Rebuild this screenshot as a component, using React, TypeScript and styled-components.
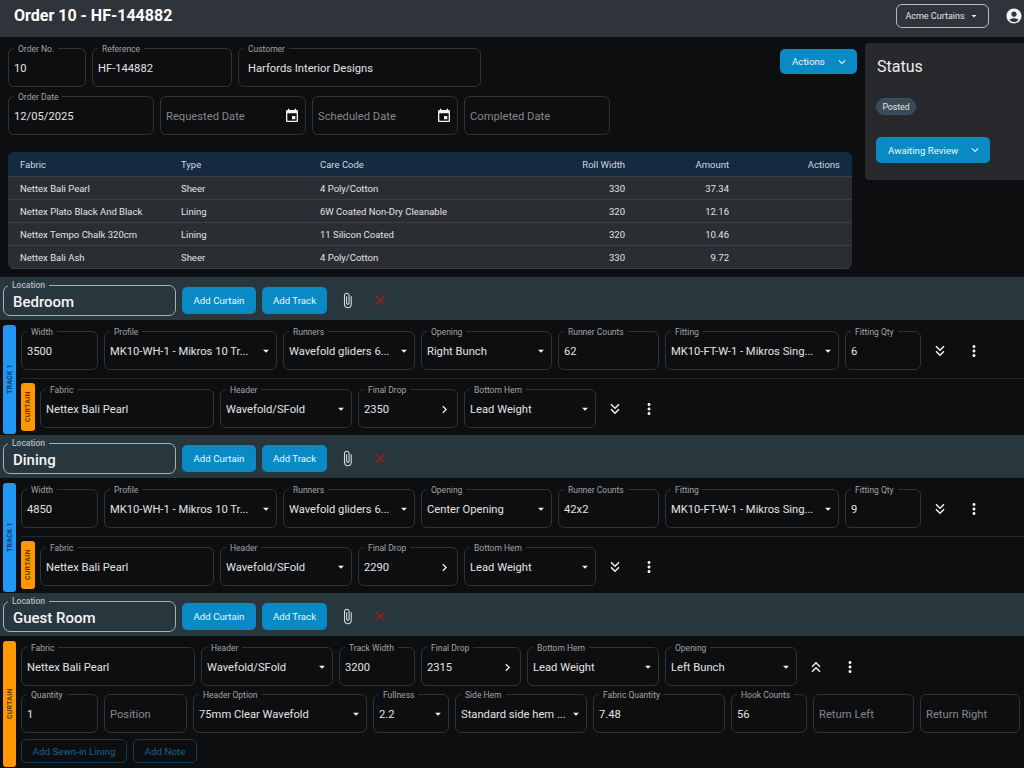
import React from 'react'
import styled, { createGlobalStyle } from 'styled-components'

const FONT = 'Roboto, "Noto Sans", Arial, sans-serif'

const GlobalStyle = createGlobalStyle`
  html, body { margin: 0; padding: 0; background: #0d0e10; }
  body { font-family: ${FONT}; color: #e3e3e3; }
  * { box-sizing: border-box; }
`

const Page = styled.div`
  width: 1024px;
  height: 768px;
  overflow: hidden;
  background: #0d0e10;
`

const TopBar = styled.header`
  height: 37px;
  display: flex;
  align-items: center;
  padding: 0 1px 6px 14px;
  background: #2f333a;
`

const Title = styled.h1`
  margin: 0;
  flex: 1;
  font-size: 16px;
  font-weight: 700;
  color: #fff;
`

const CompanyButton = styled.button`
  width: 93px;
  height: 24px;
  margin-right: 16px;
  display: flex;
  align-items: center;
  justify-content: center;
  gap: 3px;
  border: 1px solid #b6babd;
  border-radius: 6px;
  background: transparent;
  color: #e3e3e3;
  font: 9px ${FONT};
`

const TopSection = styled.section`
  display: flex;
  height: 240px;
  border-bottom: 3px solid #0d1419;
`

const OrderColumn = styled.div`
  width: 857px;
  padding: 11px 0 0 8px;
`

const FieldRow = styled.div<{ $gap?: number }>`
  display: flex;
  align-items: flex-start;
  gap: ${({ $gap }) => $gap ?? 6}px;
`

const SecondRow = styled(FieldRow)`
  margin-top: 9px;
`

const FieldBox = styled.div<{ $w: number; $h?: number; $inset?: number }>`
  position: relative;
  flex: none;
  width: ${({ $w }) => $w}px;
  height: ${({ $h }) => $h ?? 39}px;
  display: flex;
  align-items: center;
  padding: 1px 5px 0 ${({ $inset }) => $inset ?? 5}px;
  border: 1px solid #303235;
  border-radius: 6px;
  font-size: 11.2px;
`

const FieldLabel = styled.label`
  position: absolute;
  top: -5px;
  left: 5px;
  padding: 0 4px;
  background: #0d0e10;
  color: #a2a4a6;
  font-size: 8.5px;
  line-height: 10px;
  white-space: nowrap;
`

const FieldValue = styled.span<{ $muted?: boolean }>`
  flex: 1;
  min-width: 0;
  overflow: hidden;
  white-space: nowrap;
  color: ${({ $muted }) => ($muted ? '#85878a' : '#e3e3e3')};
`

const Icon = styled.svg<{ $size: number; $color?: string }>`
  flex: none;
  width: ${({ $size }) => $size}px;
  height: ${({ $size }) => $size}px;
  fill: ${({ $color }) => $color ?? '#f2f2f2'};
`

const DropIcon = styled(Icon)`
  margin-right: -2px;
`

const PrimaryButton = styled.button<{ $w: number; $h?: number }>`
  flex: none;
  width: ${({ $w }) => $w}px;
  height: ${({ $h }) => $h ?? 27}px;
  display: flex;
  align-items: center;
  justify-content: center;
  border: 0;
  border-radius: 5px;
  background: #0a8ac4;
  color: #eef6fa;
  font: 9.7px ${FONT};
`

const MenuButton = styled(PrimaryButton)`
  justify-content: space-between;
  padding: 0 8px 0 12px;
`

const ActionsButton = styled(MenuButton)`
  margin-left: auto;
  margin-top: 1px;
`

const MaterialTable = styled.table`
  width: 844px;
  margin-top: 17px;
  border-collapse: separate;
  border-spacing: 0;
  table-layout: fixed;
  border-radius: 6px;
  overflow: hidden;
  font-size: 9.5px;
`

const TableColumn = styled.col<{ $w: number }>`
  width: ${({ $w }) => $w}px;
`

const HeadCell = styled.th<{ $right?: boolean }>`
  height: 25px;
  padding: 1px 12px 0;
  background: #142a40;
  border-bottom: 1px solid #3c4046;
  color: #d4d8dc;
  font-weight: 400;
  text-align: ${({ $right }) => ($right ? 'right' : 'left')};
`

const BodyCell = styled.td<{ $right?: boolean }>`
  height: 23px;
  padding: 1px 12px 0;
  background: #2a2d32;
  border-bottom: 1px solid #3c4046;
  color: #e3e3e3;
  text-align: ${({ $right }) => ($right ? 'right' : 'left')};
`

const StatusPanel = styled.aside`
  width: 159px;
  height: 137px;
  margin: 6px 0 0 8px;
  padding: 13px 11px;
  background: #27292d;
  border-radius: 4px 0 0 4px;
`

const StatusTitle = styled.h2`
  margin: 0 0 0 1px;
  font-size: 16px;
  line-height: 22px;
  font-weight: 400;
  color: #eee;
`

const StatusChip = styled.div`
  width: 40px;
  height: 17px;
  margin-top: 20px;
  display: flex;
  align-items: center;
  justify-content: center;
  background: #3a4a55;
  border: 1px solid #2f5870;
  border-radius: 9px;
  font-size: 8.7px;
`

const StatusButton = styled(MenuButton)`
  margin-top: 22px;
`

const LocationBar = styled.div`
  height: 43px;
  display: flex;
  align-items: center;
  gap: 6px;
  padding: 4px 0 0 3px;
  background: #28363e;
`

const LocationField = styled.div`
  position: relative;
  width: 173px;
  height: 31px;
  display: flex;
  align-items: center;
  padding: 2px 0 0 9px;
  border: 1.5px solid #a6b2b7;
  border-radius: 7px;
  color: #f5f5f5;
  font-size: 15px;
  font-weight: 500;
`

const LocationLabel = styled(FieldLabel)`
  background: #28363e;
  left: 4px;
  top: -6px;
  color: #b4bcc0;
`

const IconSlot = styled.span`
  flex: none;
  width: 28px;
  height: 39px;
  display: flex;
  align-items: center;
  justify-content: center;
`

const RemoveSlot = styled(IconSlot)`
  margin-left: -1px;
`

const ExpandSlot = styled(IconSlot)`
  margin-left: -1px;
`

const ItemBlock = styled.div<{ $h: number }>`
  height: ${({ $h }) => $h}px;
  display: flex;
  gap: 5px;
  padding: 5px 0 1px 3px;
`

const SideTag = styled.div<{ $bg: string; $fg: string; $w?: number }>`
  flex: none;
  width: ${({ $w }) => $w ?? 13}px;
  display: flex;
  align-items: center;
  justify-content: center;
  background: ${({ $bg }) => $bg};
  color: ${({ $fg }) => $fg};
  border-radius: 3px;
  font-size: 7px;
  font-weight: 700;
  letter-spacing: 0.2px;
  writing-mode: vertical-rl;
  transform: rotate(180deg);
`

const ItemBody = styled.div`
  flex: 1;
  min-width: 0;
  display: flex;
  flex-direction: column;
`

const TrackRow = styled.div`
  height: 54px;
  padding-top: 6px;
  border-bottom: 1px solid #26282a;
`

const NestedCurtain = styled.div`
  height: 48px;
  margin-top: 4px;
  display: flex;
  gap: 5px;
`

const NestedFields = styled.div`
  padding-top: 6px;
`

const CurtainBody = styled(ItemBody)`
  padding-top: 6px;
  gap: 8px;
`

const LinkRow = styled.div`
  display: flex;
  gap: 6px;
  margin-top: -2px;
`

const OutlineButton = styled.button<{ $w: number }>`
  width: ${({ $w }) => $w}px;
  height: 24px;
  border: 1px solid #123a52;
  border-radius: 5px;
  background: transparent;
  color: #14628e;
  font: 9.8px ${FONT};
`

const paths = {
  account:
    'M12 2C6.48 2 2 6.48 2 12s4.48 10 10 10 10-4.48 10-10S17.52 2 12 2zm0 4c1.93 0 3.5 1.57 3.5 3.5S13.93 13 12 13s-3.5-1.57-3.5-3.5S10.07 6 12 6zm0 14c-2.03 0-4.43-.82-6.14-2.88C7.55 15.8 9.68 15 12 15s4.45.8 6.14 2.12C16.43 19.18 14.03 20 12 20z',
  event:
    'M17 12h-5v5h5v-5zM16 1v2H8V1H6v2H5c-1.11 0-1.99.9-1.99 2L3 19c0 1.1.89 2 2 2h14c1.1 0 2-.9 2-2V5c0-1.1-.9-2-2-2h-1V1h-2zm3 18H5V8h14v11z',
  dropdown: 'M7 10l5 5 5-5z',
  expand: 'M16.59 8.59 12 13.17 7.41 8.59 6 10l6 6 6-6z',
  chevronRight: 'M10 6 8.59 7.41 13.17 12l-4.58 4.59L10 18l6-6z',
  doubleDown: 'M18 6.41 16.59 5 12 9.58 7.41 5 6 6.41l6 6z M18 13l-1.41-1.41L12 16.17l-4.59-4.58L6 13l6 6z',
  doubleUp: 'M6 17.59 7.41 19 12 14.42 16.59 19 18 17.59l-6-6z M6 11l1.41 1.41L12 7.83l4.59 4.58L18 11l-6-6z',
  more: 'M12 8c1.1 0 2-.9 2-2s-.9-2-2-2-2 .9-2 2 .9 2 2 2zm0 2c-1.1 0-2 .9-2 2s.9 2 2 2 2-.9 2-2-.9-2-2-2zm0 6c-1.1 0-2 .9-2 2s.9 2 2 2 2-.9 2-2-.9-2-2-2z',
  clip: 'M16.5 6v11.5c0 2.21-1.79 4-4 4s-4-1.79-4-4V5c0-1.38 1.12-2.5 2.5-2.5s2.5 1.12 2.5 2.5v10.5c0 .55-.45 1-1 1s-1-.45-1-1V6H10v9.5c0 1.38 1.12 2.5 2.5 2.5s2.5-1.12 2.5-2.5V5c0-2.21-1.79-4-4-4S7 2.79 7 5v12.5c0 3.04 2.46 5.5 5.5 5.5s5.5-2.46 5.5-5.5V6h-1.5z',
  close:
    'M19 6.41 17.59 5 12 10.59 6.41 5 5 6.41 10.59 12 5 17.59 6.41 19 12 13.41 17.59 19 19 17.59 13.41 12z',
}

type IconName = keyof typeof paths

const Glyph = ({ name, size, color }: { name: IconName; size: number; color?: string }) => (
  <Icon viewBox="0 0 24 24" $size={size} $color={color}>
    <path d={paths[name]} />
  </Icon>
)

type FieldProps = {
  w: number
  label?: string
  value?: string
  placeholder?: string
  icon?: IconName
  inset?: number
}

const Field = ({ w, label, value, placeholder, icon, inset }: FieldProps) => (
  <FieldBox $w={w} $inset={inset}>
    {label && <FieldLabel>{label}</FieldLabel>}
    <FieldValue $muted={!value}>{value ?? placeholder}</FieldValue>
    {icon === 'dropdown' && (
      <DropIcon viewBox="0 0 24 24" $size={14}>
        <path d={paths.dropdown} />
      </DropIcon>
    )}
    {icon === 'chevronRight' && <Glyph name="chevronRight" size={15} />}
    {icon === 'event' && <Glyph name="event" size={16} />}
  </FieldBox>
)

const RowActions = ({ expand }: { expand: IconName }) => (
  <>
    <ExpandSlot>
      <Glyph name={expand} size={18} />
    </ExpandSlot>
    <IconSlot>
      <Glyph name="more" size={18} />
    </IconSlot>
  </>
)

const materials = [
  ['Nettex Bali Pearl', 'Sheer', '4 Poly/Cotton', '330', '37.34'],
  ['Nettex Plato Black And Black', 'Lining', '6W Coated Non-Dry Cleanable', '320', '12.16'],
  ['Nettex Tempo Chalk 320cm', 'Lining', '11 Silicon Coated', '320', '10.46'],
  ['Nettex Bali Ash', 'Sheer', '4 Poly/Cotton', '330', '9.72'],
]

const Location = ({ name }: { name: string }) => (
  <LocationBar>
    <LocationField>
      <LocationLabel>Location</LocationLabel>
      {name}
    </LocationField>
    <PrimaryButton $w={74}>Add Curtain</PrimaryButton>
    <PrimaryButton $w={65}>Add Track</PrimaryButton>
    <IconSlot>
      <Glyph name="clip" size={17} color="#d8dde0" />
    </IconSlot>
    <RemoveSlot>
      <Glyph name="close" size={17} color="#9a1f22" />
    </RemoveSlot>
  </LocationBar>
)

type TrackProps = {
  width: string
  opening: string
  runnerCounts: string
  fittingQty: string
  drop: string
}

const Track = ({ width, opening, runnerCounts, fittingQty, drop }: TrackProps) => (
  <ItemBlock $h={115}>
    <SideTag $bg="#2196f3" $fg="#0f3f6b">TRACK 1</SideTag>
    <ItemBody>
      <TrackRow>
        <FieldRow>
          <Field w={77} label="Width" value={width} />
          <Field w={173} label="Profile" value="MK10-WH-1 - Mikros 10 Tr..." icon="dropdown" />
          <Field w={132} label="Runners" value="Wavefold gliders 6..." icon="dropdown" />
          <Field w={131} label="Opening" value={opening} icon="dropdown" />
          <Field w={101} label="Runner Counts" value={runnerCounts} />
          <Field w={174} label="Fitting" value="MK10-FT-W-1 - Mikros Sing..." icon="dropdown" />
          <Field w={76} label="Fitting Qty" value={fittingQty} />
          <RowActions expand="doubleDown" />
        </FieldRow>
      </TrackRow>
      <NestedCurtain>
        <SideTag $bg="#ff9800" $fg="#5c3b05" $w={14}>CURTAIN</SideTag>
        <NestedFields>
          <FieldRow>
            <Field w={174} label="Fabric" value="Nettex Bali Pearl" />
            <Field w={132} label="Header" value="Wavefold/SFold" icon="dropdown" />
            <Field w={100} label="Final Drop" value={drop} icon="chevronRight" />
            <Field w={132} label="Bottom Hem" value="Lead Weight" icon="dropdown" />
            <RowActions expand="doubleDown" />
          </FieldRow>
        </NestedFields>
      </NestedCurtain>
    </ItemBody>
  </ItemBlock>
)

export default function App() {
  return (
    <Page>
      <GlobalStyle />
      <TopBar>
        <Title>Order 10 - HF-144882</Title>
        <CompanyButton>
          Acme Curtains
          <Glyph name="dropdown" size={12} />
        </CompanyButton>
        <Glyph name="account" size={18} />
      </TopBar>

      <TopSection>
        <OrderColumn>
          <FieldRow>
            <Field w={78} label="Order No." value="10" />
            <Field w={140} label="Reference" value="HF-144882" />
            <Field w={243} label="Customer" value="Harfords Interior Designs" inset={9} />
            <ActionsButton $w={77} $h={25}>
              Actions
              <Glyph name="expand" size={14} />
            </ActionsButton>
          </FieldRow>
          <SecondRow>
            <Field w={146} label="Order Date" value="12/05/2025" />
            <Field w={146} placeholder="Requested Date" icon="event" />
            <Field w={146} placeholder="Scheduled Date" icon="event" />
            <Field w={146} placeholder="Completed Date" />
          </SecondRow>

          <MaterialTable>
            <colgroup>
              <TableColumn $w={161} />
              <TableColumn $w={139} />
              <TableColumn $w={229} />
              <TableColumn $w={100} />
              <TableColumn $w={104} />
              <TableColumn $w={111} />
            </colgroup>
            <thead>
              <tr>
                <HeadCell>Fabric</HeadCell>
                <HeadCell>Type</HeadCell>
                <HeadCell>Care Code</HeadCell>
                <HeadCell $right>Roll Width</HeadCell>
                <HeadCell $right>Amount</HeadCell>
                <HeadCell $right>Actions</HeadCell>
              </tr>
            </thead>
            <tbody>
              {materials.map((row) => (
                <tr key={row[0]}>
                  <BodyCell>{row[0]}</BodyCell>
                  <BodyCell>{row[1]}</BodyCell>
                  <BodyCell>{row[2]}</BodyCell>
                  <BodyCell $right>{row[3]}</BodyCell>
                  <BodyCell $right>{row[4]}</BodyCell>
                  <BodyCell />
                </tr>
              ))}
            </tbody>
          </MaterialTable>
        </OrderColumn>

        <StatusPanel>
          <StatusTitle>Status</StatusTitle>
          <StatusChip>Posted</StatusChip>
          <StatusButton $w={114} $h={26}>
            Awaiting Review
            <Glyph name="expand" size={14} />
          </StatusButton>
        </StatusPanel>
      </TopSection>

      <Location name="Bedroom" />
      <Track width="3500" opening="Right Bunch" runnerCounts="62" fittingQty="6" drop="2350" />
      <Location name="Dining" />
      <Track width="4850" opening="Center Opening" runnerCounts="42x2" fittingQty="9" drop="2290" />
      <Location name="Guest Room" />

      <ItemBlock $h={132}>
        <SideTag $bg="#ff9800" $fg="#5c3b05">CURTAIN</SideTag>
        <CurtainBody>
          <FieldRow>
            <Field w={174} label="Fabric" value="Nettex Bali Pearl" />
            <Field w={132} label="Header" value="Wavefold/SFold" icon="dropdown" />
            <Field w={76} label="Track Width" value="3200" />
            <Field w={100} label="Final Drop" value="2315" icon="chevronRight" />
            <Field w={132} label="Bottom Hem" value="Lead Weight" icon="dropdown" />
            <Field w={132} label="Opening" value="Left Bunch" icon="dropdown" />
            <RowActions expand="doubleUp" />
          </FieldRow>
          <FieldRow>
            <Field w={77} label="Quantity" value="1" />
            <Field w={83} placeholder="Position" />
            <Field w={174} label="Header Option" value="75mm Clear Wavefold" icon="dropdown" />
            <Field w={76} label="Fullness" value="2.2" icon="dropdown" />
            <Field w={132} label="Side Hem" value="Standard side hem ..." icon="dropdown" />
            <Field w={132} label="Fabric Quantity" value="7.48" />
            <Field w={76} label="Hook Counts" value="56" />
            <Field w={101} placeholder="Return Left" />
            <Field w={100} placeholder="Return Right" />
          </FieldRow>
          <LinkRow>
            <OutlineButton $w={106}>Add Sewn-in Lining</OutlineButton>
            <OutlineButton $w={64}>Add Note</OutlineButton>
          </LinkRow>
        </CurtainBody>
      </ItemBlock>
    </Page>
  )
}
